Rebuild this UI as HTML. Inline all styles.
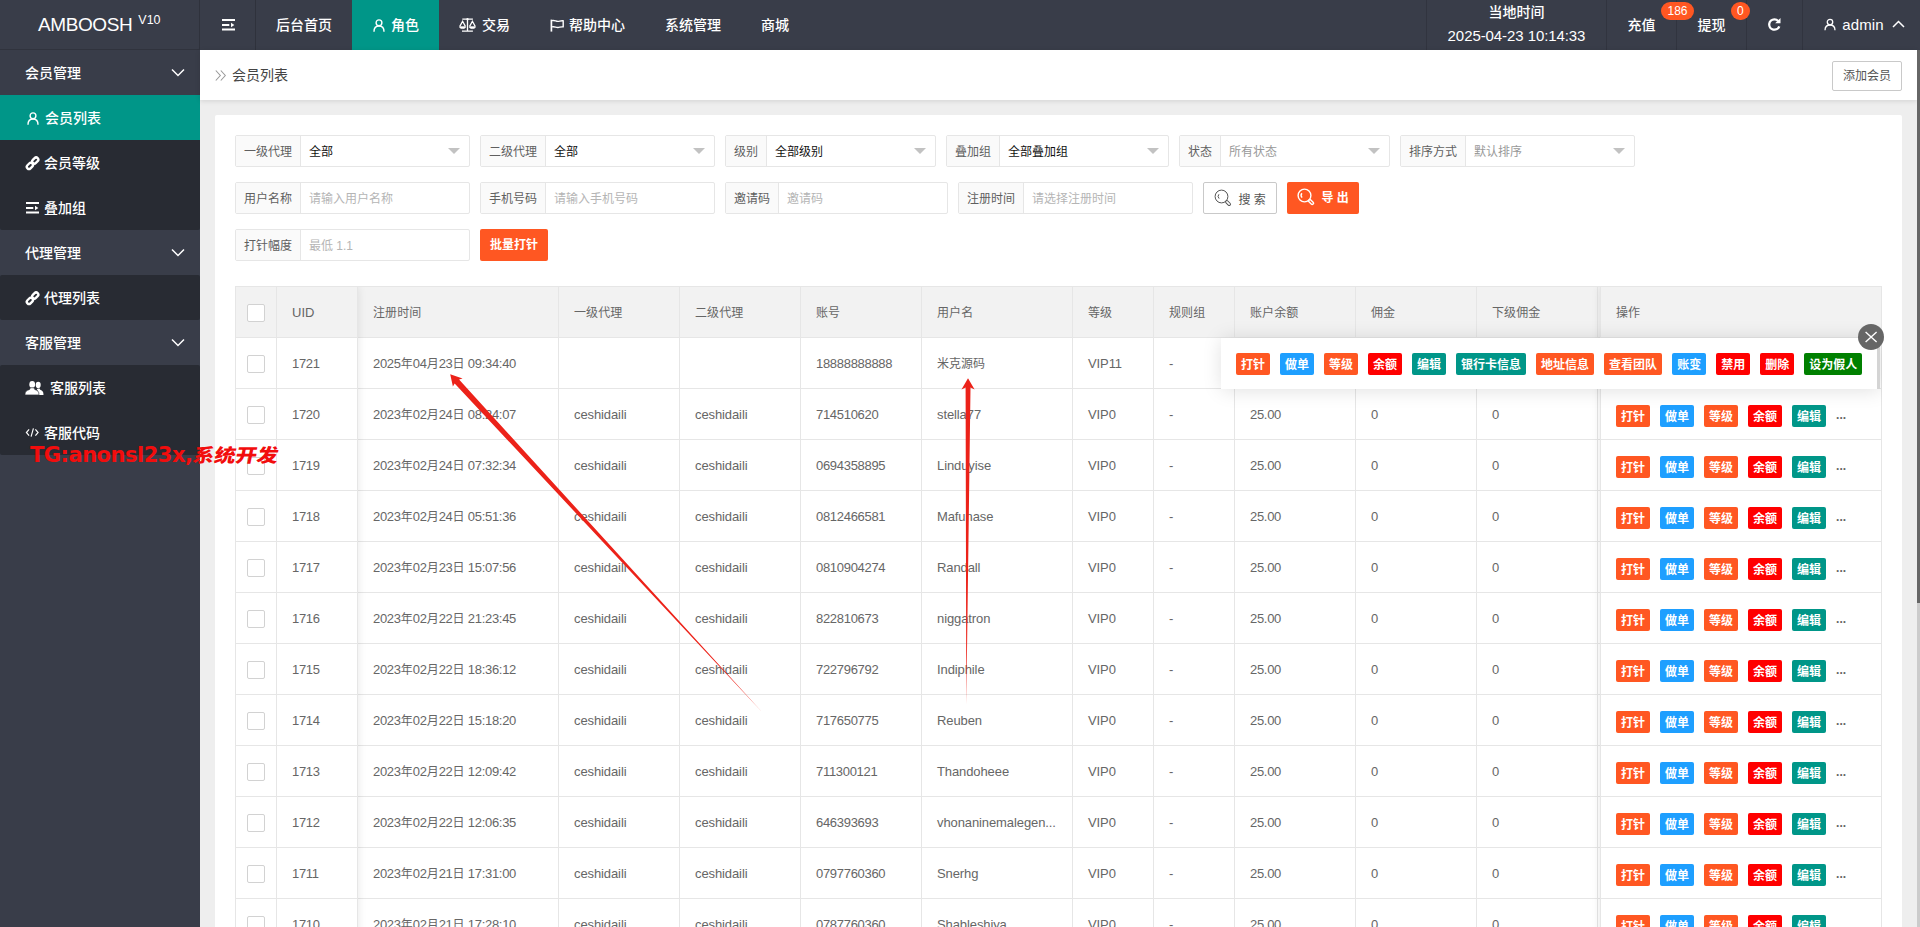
<!DOCTYPE html>
<html lang="zh-CN">
<head>
<meta charset="utf-8">
<title>会员列表</title>
<style>
*{box-sizing:border-box;margin:0;padding:0}
html,body{width:1920px;height:927px;overflow:hidden}
body{position:relative;background:#eeeeee;font-family:"Liberation Sans","Noto Sans CJK SC",sans-serif;font-size:14px;color:#333;-webkit-font-smoothing:antialiased}
ul{list-style:none}
svg{display:block}
/* ---------- header ---------- */
.hd{position:absolute;left:0;top:0;width:1920px;height:50px;background:#393d49;color:#fff}
.logo{position:absolute;left:0;top:0;width:200px;height:50px;line-height:49px;font-size:19px;padding-left:38px;border-right:1px solid #2f323c;border-bottom:1px solid #30333d;letter-spacing:-.4px}
.logo sup{font-size:12.500px;font-weight:400;position:relative;top:.5px;vertical-align:super;margin-left:6px;letter-spacing:0;line-height:0}
.nav{position:absolute;left:200px;top:0;height:50px;display:flex}
.nav li{height:50px;line-height:50px;padding:0 20px;font-size:14px;font-weight:500;display:flex;align-items:center;white-space:nowrap}
.nav li.tg{width:56px;padding:0 0 0 2px;justify-content:center;border-right:1px solid #2f323c}
.nav li.tg svg{margin:0}
.nav li.on{background:#009688}
.nav li svg{margin-right:5px}
.rnav{position:absolute;right:0;top:0;height:50px;display:flex}
.rnav li{position:relative;height:50px;padding-bottom:2px;border-left:1px solid #31343f;display:flex;align-items:center;justify-content:center;font-size:14px;font-weight:500;white-space:nowrap}
.badge{position:absolute;z-index:3;top:2px;height:18px;line-height:18px;border-radius:9px;background:#ff5722;color:#fff;font-size:12px;font-weight:400;padding:0 5px;text-align:center}
/* ---------- side ---------- */
.side{position:absolute;left:0;top:50px;width:200px;height:877px;background:#393d49;color:#fff}
.side li{position:relative;height:45px;line-height:47px;font-size:14px;font-weight:500;white-space:nowrap}
.side li.p{padding-left:25px}
.side li.c{background:#282b33;line-height:48px;padding-left:25px;display:flex;align-items:center}
.side li.c svg{margin-right:5px;position:relative;top:1px}
.side li.on{background:#009688}
.side li.rt{border-radius:2px 2px 0 0}.side li.rb{border-radius:0 0 2px 2px}.side li.rt.rb{border-radius:2px}
.side li.p svg{position:absolute;right:15px;top:18px}
.wm{position:absolute;left:30px;top:440px;line-height:30px;color:#f20d0d;white-space:nowrap;z-index:50;font-family:"DejaVu Sans","Liberation Sans","Noto Sans CJK SC",sans-serif}
.wl{font-size:21px;font-weight:700;letter-spacing:-.5px}
.wc{display:inline-block;font-size:18.500px;font-weight:900;letter-spacing:0;margin-left:0;position:relative;top:-.5px;transform:scaleX(1.150) skewX(-10deg);transform-origin:0 70%;font-family:"Liberation Sans","Noto Sans CJK SC",sans-serif}
/* ---------- breadcrumb bar ---------- */
.bar{position:absolute;left:200px;top:50px;width:1717px;height:50px;background:#fff;box-shadow:0 1px 5px rgba(0,0,0,.12)}
.bar .bc{position:absolute;left:15px;top:0;line-height:50px;font-size:14px;color:#444;display:flex;align-items:center}
.bar .bc svg{margin-right:6px}
.btn-add{position:absolute;left:1632px;top:11px;width:70px;height:30px;line-height:28px;border:1px solid #c9c9c9;border-radius:2px;background:#fff;color:#555;font-size:12px;text-align:center}
.edge{position:absolute;left:1917px;top:50px;width:3px;height:877px;background:#cbcbcb}
.edge i{display:block;width:3px;height:553px;background:#666}
/* ---------- card ---------- */
.card{position:absolute;left:215px;top:115px;width:1687px;height:830px;background:#fff;border-radius:2px}
.fg{position:absolute;height:32px;border:1px solid #e6e6e6;border-radius:2px;background:#fff;display:flex;font-size:12px;line-height:32px}
.fg .lb{height:30px;padding:0 8px;background:#fafafa;border-right:1px solid #e6e6e6;color:#5f5f5f;white-space:nowrap}
.fg .in{position:relative;flex:1;padding-left:8px;color:#b5b5b5;white-space:nowrap}
.fg .in.v{color:#111}
.fg .in.s{color:#999}
.fg .tri{position:absolute;right:9.500px;top:12px;width:0;height:0;border:6px solid transparent;border-top-color:#c2c2c2;border-bottom-width:0}
.btn{position:absolute;height:32px;line-height:32px;border-radius:2px;font-size:12px;text-align:center;white-space:nowrap}
.btn.o{background:#ff5722;color:#fff;font-weight:700}
.btn.w{background:#fff;border:1px solid #c9c9c9;color:#555;line-height:30px}
.frow{position:relative;display:flex;height:32px;margin:0 0 15px 20px}

.card{padding-top:20px}
.frow .fg,.frow .btn{position:relative;margin-right:10px;flex:none}
.fg .in{flex:none;width:168px}
.btn{display:flex;align-items:center;justify-content:center}
.btn svg{margin-right:6px}
/* table */
.tb{position:absolute;left:20px;top:171px;width:1647px;height:760px;border:1px solid #e6e6e6;border-bottom:0;background:#fff;overflow:hidden}
.tr{display:flex;height:51px;border-bottom:1px solid #e6e6e6}
.tr.th{background:#f2f2f2}
.td{flex:none;height:50px;line-height:52px;padding:0 15px;border-right:1px solid #e6e6e6;font-size:13px;color:#666;white-space:nowrap;overflow:hidden;letter-spacing:-.3px}
.th .td{font-size:13px;letter-spacing:0}
.th .z{letter-spacing:.1px}
.td.l{letter-spacing:-.1px}
.z{font-size:12px;letter-spacing:0}
.td.ck{width:41px;padding:0;position:relative}
.cb{position:absolute;left:11px;top:17px;width:18px;height:18px;border:1px solid #d2d2d2;border-radius:2px;background:#fff}
.fxl{position:absolute;left:0;top:0;width:122px;height:760px;box-shadow:1px 0 8px rgba(0,0,0,.08);pointer-events:none}
.fxr{position:absolute;left:1364px;top:0;width:282px;height:760px;background:#fff;border-left:1px solid #e6e6e6;box-shadow:-1px 0 8px rgba(0,0,0,.08)}
.fxr .tr{background:#fff}
.fxr .tr.th{background:#f2f2f2}
.fxr .td{border-right:0}
.td.op{position:relative;display:flex;padding-top:16px}
.x{display:block;flex:none;height:22px;line-height:25px;padding:0 5px;margin-right:10px;border-radius:2px;color:#fff;font-size:12px;font-weight:700;letter-spacing:0}
.x.o{background:#ff5722}.x.b{background:#1e9fff}.x.r{background:#f00}.x.g{background:#009688}.x.gr{background:#008000}
.more{line-height:22px;font-size:12px;font-weight:700;color:#666;letter-spacing:0;margin-top:-1px;margin-left:0}
.tipw{position:absolute;left:20px;top:171px;width:1647px;height:760px;overflow:hidden;z-index:5}
.tip{position:absolute;left:986px;top:52px;width:659px;height:51px;background:#fff;box-shadow:1px 1px 20px rgba(0,0,0,.13);display:flex;padding:15px 0 0 15px;z-index:5}
.tip .sb{position:absolute;right:0;top:0;width:3px;height:51px;background:#d4d4d4}
.tipc{position:absolute;left:1643px;top:209px;width:26px;height:26px;border-radius:50%;background:#666;z-index:6}
.ar{position:absolute;left:0;top:0;z-index:40;pointer-events:none}
</style>
</head>
<body>
<!-- header -->
<div class="hd">
  <div class="logo">AMBOOSH<sup>V10</sup></div>
  <ul class="nav">
    <li class="tg"><svg width="13" height="12" viewBox="0 0 13 12"><path d="M0 1h13M0 6h7.300M0 10.500h13" stroke="#fff" stroke-width="2" fill="none"/><path d="M9 3.700L12.400 6 9 8.300z" fill="#fff"/></svg></li>
    <li>后台首页</li>
    <li class="on"><svg width="12" height="13" viewBox="0 0 12 13" style="margin-left:1px;margin-right:6px"><circle cx="6" cy="3.800" r="2.900" stroke="#fff" stroke-width="1.400" fill="none"/><path d="M1 12.700c0-3.400 2-5.700 5-5.700s5 2.300 5 5.700" stroke="#fff" stroke-width="1.400" fill="none"/></svg>角色</li>
    <li><svg width="17" height="14" viewBox="0 0 17 14" style="position:relative;top:.2px;margin-right:6px"><g stroke="#fff" fill="none" stroke-width="1.300"><path d="M3.300 1.150h10.600M8.500 1.500v11.500M3 13.150h10.900"/><circle cx="8.500" cy="1.200" r="1.150" fill="#fff" stroke="none"/><path d="M.8 8.400L3.600 3.300 6.400 8.400M10.600 8.400l2.800-5.100 2.800 5.100" stroke-width="1.250" stroke-linejoin="miter"/><path d="M.5 8.700h6.200c0 1.100-1.300 1.900-3.100 1.900S.5 9.800.5 8.700zM10.300 8.700h6.200c0 1.100-1.300 1.900-3.100 1.900s-3.100-.8-3.100-1.900z" fill="#fff" stroke-width=".7"/></g></svg>交易</li>
    <li><svg width="14" height="13" viewBox="0 0 14 13" style="position:relative;top:0px"><path d="M1.400 .6v12" stroke="#fff" stroke-width="1.700"/><path d="M2 1.700c2.500-1 4 .9 6 .7 1.800-.2 3-.9 5.200-.6v6.100c-2.200-.3-3.400.4-5.200.6-2 .2-3.500-1.500-6-.6" stroke="#fff" stroke-width="1.400" fill="none" stroke-linejoin="round"/></svg>帮助中心</li>
    <li>系统管理</li>
    <li>商城</li>
  </ul>
  <ul class="rnav">
    <li style="width:180px;flex-direction:column;line-height:24px;font-size:14px"><span style="margin-top:-1px">当地时间</span><span style="font-size:15px;font-weight:400;letter-spacing:-.08px">2025-04-23 10:14:33</span></li>
    <li style="width:70px">充值<span class="badge" style="left:54px;padding:0 6.500px">186</span></li>
    <li style="width:70px">提现<span class="badge" style="left:54px;padding:0 6px">0</span></li>
    <li style="width:56px"><svg width="15" height="15" viewBox="0 0 15 15"><path d="M12.300 9.300A5.200 5.200 0 117.400 2.300c1.600 0 2.900.7 3.800 1.700" stroke="#fff" stroke-width="2.300" fill="none"/><path d="M13.500 1v5.300H8.200z" fill="#fff"/></svg></li>
    <li style="width:118px;font-size:15px;font-weight:400;padding-left:5px;letter-spacing:.1px"><svg width="12" height="13" viewBox="0 0 14 14" style="margin-left:1px;margin-right:6px"><circle cx="7" cy="4.2" r="3.2" stroke="#fff" stroke-width="1.5" fill="none"/><path d="M1.2 13.6c0-3.6 2.4-6 5.8-6s5.8 2.4 5.8 6" stroke="#fff" stroke-width="1.5" fill="none"/></svg>admin<svg width="13" height="8" viewBox="0 0 13 8" style="margin-left:8px"><path d="M1 7l5.5-5.5L12 7" stroke="#fff" stroke-width="1.5" fill="none"/></svg></li>
  </ul>
</div>
<!-- sidebar -->
<ul class="side">
  <li class="p">会员管理<svg width="14" height="9" viewBox="0 0 14 9"><path d="M1 1.5l6 6 6-6" stroke="#fff" stroke-width="1.5" fill="none"/></svg></li>
  <li class="c on"><svg width="12" height="13" viewBox="0 0 12 13" style="margin-left:1.500px;margin-right:6.500px"><circle cx="6" cy="3.800" r="2.900" stroke="#fff" stroke-width="1.400" fill="none"/><path d="M1 12.700c0-3.400 2-5.700 5-5.700s5 2.300 5 5.700" stroke="#fff" stroke-width="1.400" fill="none"/></svg>会员列表</li>
  <li class="c"><svg width="15" height="15" viewBox="0 0 14.500 14.500" style="margin-left:-.5px;margin-right:4.500px"><g fill="none" stroke="#fff" stroke-width="2.300"><rect x="-3.300" y="-2.100" width="6.600" height="4.200" rx="2.100" transform="translate(4.700 9.600) rotate(-45)"/><rect x="-3.300" y="-2.100" width="6.600" height="4.200" rx="2.100" transform="translate(9.900 4.400) rotate(-45)"/></g></svg>会员等级</li>
  <li class="c rb"><svg width="13" height="12" viewBox="0 0 13 12" style="margin-left:1px;margin-right:5px;top:0"><path d="M0 1h13M0 6h7.300M0 10.500h13" stroke="#fff" stroke-width="2" fill="none"/><path d="M9 3.700L12.400 6 9 8.300z" fill="#fff"/></svg>叠加组</li>
  <li class="p">代理管理<svg width="14" height="9" viewBox="0 0 14 9"><path d="M1 1.5l6 6 6-6" stroke="#fff" stroke-width="1.5" fill="none"/></svg></li>
  <li class="c rt rb"><svg width="15" height="15" viewBox="0 0 14.500 14.500" style="margin-left:-.5px;margin-right:4.500px"><g fill="none" stroke="#fff" stroke-width="2.300"><rect x="-3.300" y="-2.100" width="6.600" height="4.200" rx="2.100" transform="translate(4.700 9.600) rotate(-45)"/><rect x="-3.300" y="-2.100" width="6.600" height="4.200" rx="2.100" transform="translate(9.900 4.400) rotate(-45)"/></g></svg>代理列表</li>
  <li class="p">客服管理<svg width="14" height="9" viewBox="0 0 14 9"><path d="M1 1.5l6 6 6-6" stroke="#fff" stroke-width="1.5" fill="none"/></svg></li>
  <li class="c rt"><svg width="19" height="14" viewBox="0 0 19 14" style="margin-right:6px;top:0"><g fill="#fff"><ellipse cx="13.200" cy="3.900" rx="2.500" ry="3.100"/><path d="M13.300 13.900C13.500 11 13.200 9.800 11.800 8.800l.9-1.400h1.900l.6 1.300c2.400.9 3.300 1.900 3.300 5.200z"/><ellipse cx="7.200" cy="3.400" rx="2.900" ry="3.400"/><path d="M0 13.900c0-3.400 1.500-4.400 4.600-5.400l.8-1.700h3.600l.8 1.700c3.100 1 4.200 2 4.200 5.400z" stroke="#282b33" stroke-width=".6"/></g></svg>客服列表</li>
  <li class="c rb"><svg width="14.500" height="9" viewBox="0 0 15 10" style="margin-right:4.500px;top:0"><path d="M4 1.5L1 5l3 3.500M11 1.500L14 5l-3 3.500M8.800 .5L6.200 9.500" stroke="#fff" stroke-width="1.300" fill="none"/></svg>客服代码</li>
</ul>
<div class="wm"><span class="wl">TG:anonsl23x,</span><span class="wc">系统开发</span></div>
<!-- breadcrumb -->
<div class="bar">
  <div class="bc"><svg width="11" height="11" viewBox="0 0 11 11"><path d="M.8 .5L5.300 5.500 .8 10.500M5.800 .5L10.300 5.500l-4.500 5" stroke="#999" stroke-width="1.100" fill="none"/></svg>会员列表</div>
  <div class="btn-add">添加会员</div>
</div>
<div class="edge"><i></i></div>
<!-- card -->
<div class="card" id="card">
<div class="frow"><div class="fg"><span class="lb">一级代理</span><span class="in v">全部<i class="tri"></i></span></div><div class="fg"><span class="lb">二级代理</span><span class="in v">全部<i class="tri"></i></span></div><div class="fg"><span class="lb">级别</span><span class="in v">全部级别<i class="tri"></i></span></div><div class="fg"><span class="lb">叠加组</span><span class="in v">全部叠加组<i class="tri"></i></span></div><div class="fg"><span class="lb">状态</span><span class="in s">所有状态<i class="tri"></i></span></div><div class="fg"><span class="lb">排序方式</span><span class="in s">默认排序<i class="tri"></i></span></div></div>
<div class="frow"><div class="fg"><span class="lb">用户名称</span><span class="in ">请输入用户名称</span></div><div class="fg"><span class="lb">手机号码</span><span class="in ">请输入手机号码</span></div><div class="fg"><span class="lb">邀请码</span><span class="in ">邀请码</span></div><div class="fg"><span class="lb">注册时间</span><span class="in ">请选择注册时间</span></div><div class="btn w" style="width:74px"><svg width="18" height="18" viewBox="0 0 18 18" style=""><circle cx="7.500" cy="7.500" r="6.400" stroke="#555" stroke-width="1" fill="none"/><path d="M4.900 5.300Q3.100 7.400 5.100 9.600" stroke="#555" stroke-width="1" fill="none"/><rect x="0" y="-1.300" width="5.800" height="2.600" rx="1.300" transform="translate(12 12) rotate(45)" stroke="#555" stroke-width="1" fill="none"/></svg><span style="position:relative;top:1.500px">搜 索</span></div><div class="btn o" style="width:72px"><svg width="18" height="18" viewBox="0 0 18 18" style="position:relative;top:-1.500px"><circle cx="7.500" cy="7.500" r="6.400" stroke="#fff" stroke-width="1.4" fill="none"/><path d="M4.900 5.300Q3.100 7.400 5.100 9.600" stroke="#fff" stroke-width="1.4" fill="none"/><rect x="0" y="-1.300" width="5.800" height="2.600" rx="1.300" transform="translate(12 12) rotate(45)" stroke="#fff" stroke-width="1.4" fill="none"/></svg><span>导 出</span></div></div>
<div class="frow"><div class="fg"><span class="lb">打针幅度</span><span class="in ">最低 1.1</span></div><div class="btn o" style="width:68px">批量打针</div></div>
<div class="tb">
<div class="tr th"><div class="td ck"><i class="cb"></i></div><div class="td" style="width:81px">UID</div><div class="td" style="width:201px"><span class="z">注册时间</span></div><div class="td" style="width:121px"><span class="z">一级代理</span></div><div class="td" style="width:121px"><span class="z">二级代理</span></div><div class="td" style="width:121px"><span class="z">账号</span></div><div class="td" style="width:151px"><span class="z">用户名</span></div><div class="td" style="width:81px"><span class="z">等级</span></div><div class="td" style="width:81px"><span class="z">规则组</span></div><div class="td" style="width:121px"><span class="z">账户余额</span></div><div class="td" style="width:121px"><span class="z">佣金</span></div><div class="td" style="width:121px"><span class="z">下级佣金</span></div></div>
<div class="tr"><div class="td ck"><i class="cb"></i></div><div class="td" style="width:81px">1721</div><div class="td" style="width:201px">2025<span class="z">年</span>04<span class="z">月</span>23<span class="z">日</span> 09:34:40</div><div class="td l" style="width:121px"></div><div class="td l" style="width:121px"></div><div class="td" style="width:121px">18888888888</div><div class="td l" style="width:151px"><span class="z">米克源码</span></div><div class="td l" style="width:81px">VIP11</div><div class="td" style="width:81px">-</div><div class="td" style="width:121px"></div><div class="td" style="width:121px"></div><div class="td" style="width:121px"></div></div>
<div class="tr"><div class="td ck"><i class="cb"></i></div><div class="td" style="width:81px">1720</div><div class="td" style="width:201px">2023<span class="z">年</span>02<span class="z">月</span>24<span class="z">日</span> 08:24:07</div><div class="td l" style="width:121px">ceshidaili</div><div class="td l" style="width:121px">ceshidaili</div><div class="td" style="width:121px">714510620</div><div class="td l" style="width:151px">stella77</div><div class="td l" style="width:81px">VIP0</div><div class="td" style="width:81px">-</div><div class="td" style="width:121px">25.00</div><div class="td" style="width:121px">0</div><div class="td" style="width:121px">0</div></div>
<div class="tr"><div class="td ck"><i class="cb"></i></div><div class="td" style="width:81px">1719</div><div class="td" style="width:201px">2023<span class="z">年</span>02<span class="z">月</span>24<span class="z">日</span> 07:32:34</div><div class="td l" style="width:121px">ceshidaili</div><div class="td l" style="width:121px">ceshidaili</div><div class="td" style="width:121px">0694358895</div><div class="td l" style="width:151px">Linduyise</div><div class="td l" style="width:81px">VIP0</div><div class="td" style="width:81px">-</div><div class="td" style="width:121px">25.00</div><div class="td" style="width:121px">0</div><div class="td" style="width:121px">0</div></div>
<div class="tr"><div class="td ck"><i class="cb"></i></div><div class="td" style="width:81px">1718</div><div class="td" style="width:201px">2023<span class="z">年</span>02<span class="z">月</span>24<span class="z">日</span> 05:51:36</div><div class="td l" style="width:121px">ceshidaili</div><div class="td l" style="width:121px">ceshidaili</div><div class="td" style="width:121px">0812466581</div><div class="td l" style="width:151px">Mafunase</div><div class="td l" style="width:81px">VIP0</div><div class="td" style="width:81px">-</div><div class="td" style="width:121px">25.00</div><div class="td" style="width:121px">0</div><div class="td" style="width:121px">0</div></div>
<div class="tr"><div class="td ck"><i class="cb"></i></div><div class="td" style="width:81px">1717</div><div class="td" style="width:201px">2023<span class="z">年</span>02<span class="z">月</span>23<span class="z">日</span> 15:07:56</div><div class="td l" style="width:121px">ceshidaili</div><div class="td l" style="width:121px">ceshidaili</div><div class="td" style="width:121px">0810904274</div><div class="td l" style="width:151px">Randall</div><div class="td l" style="width:81px">VIP0</div><div class="td" style="width:81px">-</div><div class="td" style="width:121px">25.00</div><div class="td" style="width:121px">0</div><div class="td" style="width:121px">0</div></div>
<div class="tr"><div class="td ck"><i class="cb"></i></div><div class="td" style="width:81px">1716</div><div class="td" style="width:201px">2023<span class="z">年</span>02<span class="z">月</span>22<span class="z">日</span> 21:23:45</div><div class="td l" style="width:121px">ceshidaili</div><div class="td l" style="width:121px">ceshidaili</div><div class="td" style="width:121px">822810673</div><div class="td l" style="width:151px">niggatron</div><div class="td l" style="width:81px">VIP0</div><div class="td" style="width:81px">-</div><div class="td" style="width:121px">25.00</div><div class="td" style="width:121px">0</div><div class="td" style="width:121px">0</div></div>
<div class="tr"><div class="td ck"><i class="cb"></i></div><div class="td" style="width:81px">1715</div><div class="td" style="width:201px">2023<span class="z">年</span>02<span class="z">月</span>22<span class="z">日</span> 18:36:12</div><div class="td l" style="width:121px">ceshidaili</div><div class="td l" style="width:121px">ceshidaili</div><div class="td" style="width:121px">722796792</div><div class="td l" style="width:151px">Indiphile</div><div class="td l" style="width:81px">VIP0</div><div class="td" style="width:81px">-</div><div class="td" style="width:121px">25.00</div><div class="td" style="width:121px">0</div><div class="td" style="width:121px">0</div></div>
<div class="tr"><div class="td ck"><i class="cb"></i></div><div class="td" style="width:81px">1714</div><div class="td" style="width:201px">2023<span class="z">年</span>02<span class="z">月</span>22<span class="z">日</span> 15:18:20</div><div class="td l" style="width:121px">ceshidaili</div><div class="td l" style="width:121px">ceshidaili</div><div class="td" style="width:121px">717650775</div><div class="td l" style="width:151px">Reuben</div><div class="td l" style="width:81px">VIP0</div><div class="td" style="width:81px">-</div><div class="td" style="width:121px">25.00</div><div class="td" style="width:121px">0</div><div class="td" style="width:121px">0</div></div>
<div class="tr"><div class="td ck"><i class="cb"></i></div><div class="td" style="width:81px">1713</div><div class="td" style="width:201px">2023<span class="z">年</span>02<span class="z">月</span>22<span class="z">日</span> 12:09:42</div><div class="td l" style="width:121px">ceshidaili</div><div class="td l" style="width:121px">ceshidaili</div><div class="td" style="width:121px">711300121</div><div class="td l" style="width:151px">Thandoheee</div><div class="td l" style="width:81px">VIP0</div><div class="td" style="width:81px">-</div><div class="td" style="width:121px">25.00</div><div class="td" style="width:121px">0</div><div class="td" style="width:121px">0</div></div>
<div class="tr"><div class="td ck"><i class="cb"></i></div><div class="td" style="width:81px">1712</div><div class="td" style="width:201px">2023<span class="z">年</span>02<span class="z">月</span>22<span class="z">日</span> 12:06:35</div><div class="td l" style="width:121px">ceshidaili</div><div class="td l" style="width:121px">ceshidaili</div><div class="td" style="width:121px">646393693</div><div class="td l" style="width:151px">vhonaninemalegen...</div><div class="td l" style="width:81px">VIP0</div><div class="td" style="width:81px">-</div><div class="td" style="width:121px">25.00</div><div class="td" style="width:121px">0</div><div class="td" style="width:121px">0</div></div>
<div class="tr"><div class="td ck"><i class="cb"></i></div><div class="td" style="width:81px">1711</div><div class="td" style="width:201px">2023<span class="z">年</span>02<span class="z">月</span>21<span class="z">日</span> 17:31:00</div><div class="td l" style="width:121px">ceshidaili</div><div class="td l" style="width:121px">ceshidaili</div><div class="td" style="width:121px">0797760360</div><div class="td l" style="width:151px">Snerhg</div><div class="td l" style="width:81px">VIP0</div><div class="td" style="width:81px">-</div><div class="td" style="width:121px">25.00</div><div class="td" style="width:121px">0</div><div class="td" style="width:121px">0</div></div>
<div class="tr"><div class="td ck"><i class="cb"></i></div><div class="td" style="width:81px">1710</div><div class="td" style="width:201px">2023<span class="z">年</span>02<span class="z">月</span>21<span class="z">日</span> 17:28:10</div><div class="td l" style="width:121px">ceshidaili</div><div class="td l" style="width:121px">ceshidaili</div><div class="td" style="width:121px">0787760360</div><div class="td l" style="width:151px">Shableshiya</div><div class="td l" style="width:81px">VIP0</div><div class="td" style="width:81px">-</div><div class="td" style="width:121px">25.00</div><div class="td" style="width:121px">0</div><div class="td" style="width:121px">0</div></div>
<div class="fxl"></div>
<div class="fxr">
<div class="tr th"><div class="td" style="width:280px"><span class="z">操作</span></div></div>
<div class="tr"><div class="td op" style="width:280px"></div></div>
<div class="tr"><div class="td op" style="width:280px"><b class="x o">打针</b><b class="x b">做单</b><b class="x o">等级</b><b class="x r">余额</b><b class="x g">编辑</b><span class="more">...</span></div></div>
<div class="tr"><div class="td op" style="width:280px"><b class="x o">打针</b><b class="x b">做单</b><b class="x o">等级</b><b class="x r">余额</b><b class="x g">编辑</b><span class="more">...</span></div></div>
<div class="tr"><div class="td op" style="width:280px"><b class="x o">打针</b><b class="x b">做单</b><b class="x o">等级</b><b class="x r">余额</b><b class="x g">编辑</b><span class="more">...</span></div></div>
<div class="tr"><div class="td op" style="width:280px"><b class="x o">打针</b><b class="x b">做单</b><b class="x o">等级</b><b class="x r">余额</b><b class="x g">编辑</b><span class="more">...</span></div></div>
<div class="tr"><div class="td op" style="width:280px"><b class="x o">打针</b><b class="x b">做单</b><b class="x o">等级</b><b class="x r">余额</b><b class="x g">编辑</b><span class="more">...</span></div></div>
<div class="tr"><div class="td op" style="width:280px"><b class="x o">打针</b><b class="x b">做单</b><b class="x o">等级</b><b class="x r">余额</b><b class="x g">编辑</b><span class="more">...</span></div></div>
<div class="tr"><div class="td op" style="width:280px"><b class="x o">打针</b><b class="x b">做单</b><b class="x o">等级</b><b class="x r">余额</b><b class="x g">编辑</b><span class="more">...</span></div></div>
<div class="tr"><div class="td op" style="width:280px"><b class="x o">打针</b><b class="x b">做单</b><b class="x o">等级</b><b class="x r">余额</b><b class="x g">编辑</b><span class="more">...</span></div></div>
<div class="tr"><div class="td op" style="width:280px"><b class="x o">打针</b><b class="x b">做单</b><b class="x o">等级</b><b class="x r">余额</b><b class="x g">编辑</b><span class="more">...</span></div></div>
<div class="tr"><div class="td op" style="width:280px"><b class="x o">打针</b><b class="x b">做单</b><b class="x o">等级</b><b class="x r">余额</b><b class="x g">编辑</b><span class="more">...</span></div></div>
<div class="tr"><div class="td op" style="width:280px"><b class="x o">打针</b><b class="x b">做单</b><b class="x o">等级</b><b class="x r">余额</b><b class="x g">编辑</b><span class="more">...</span></div></div>
</div>
</div>
<div class="tipw"><div class="tip"><b class="x o">打针</b><b class="x b">做单</b><b class="x o">等级</b><b class="x r">余额</b><b class="x g">编辑</b><b class="x g">银行卡信息</b><b class="x o">地址信息</b><b class="x o">查看团队</b><b class="x b">账变</b><b class="x r">禁用</b><b class="x r">删除</b><b class="x gr">设为假人</b><i class="sb"></i></div></div>
<div class="tipc"><svg width="26" height="26" viewBox="0 0 26 26"><path d="M7.600 8.100l11 9.800M18.600 8.100l-11 9.800" stroke="#fff" stroke-width="1.400" fill="none"/></svg></div>
</div>
<svg class="ar" width="1920" height="927" viewBox="0 0 1920 927">
<polygon points="450.200,374.300 462.600,378.500 459.050,379.500 762,712 454.650,383.550 452.900,386.400" fill="#ec2219"/>
<polygon points="968,378.300 974.600,389.600 970.500,387.600 966.300,704 965.600,387.600 961.500,389.600" fill="#ec2219"/>
</svg>

</body>
</html>
